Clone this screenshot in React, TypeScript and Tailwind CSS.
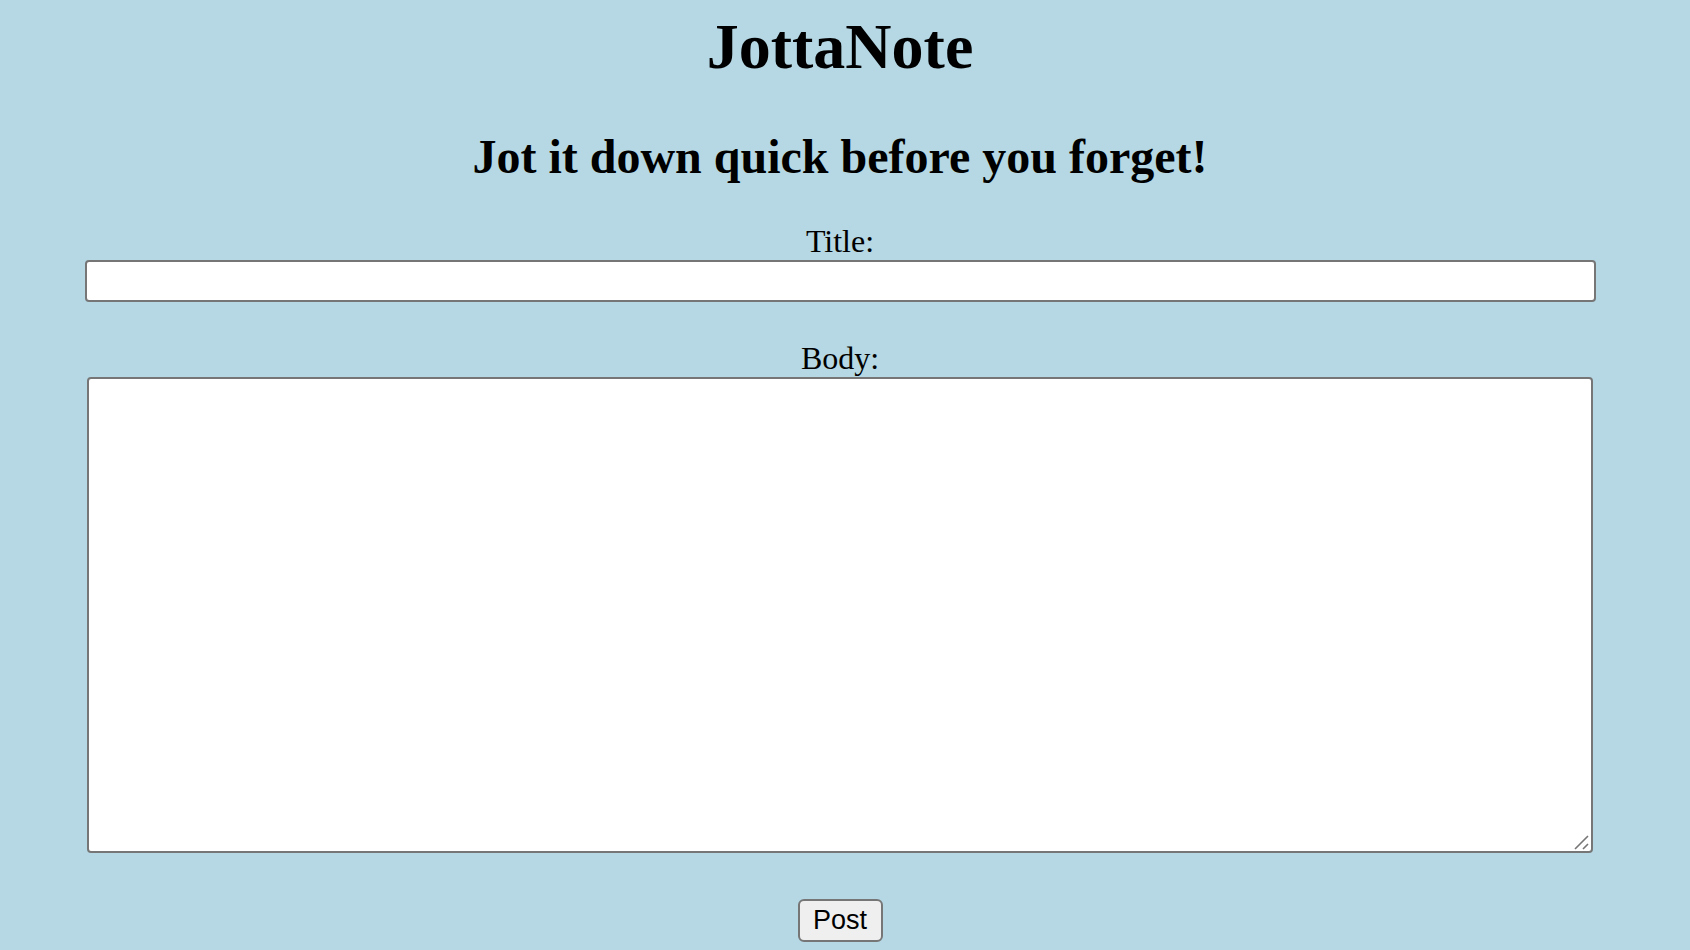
import { useState } from "react";

const serif = "font-['Liberation_Serif','Times_New_Roman',serif]";

const ResizeGrip = () => (
  <svg
    className="absolute right-[4px] bottom-[3px] pointer-events-none"
    width="15"
    height="15"
    viewBox="0 0 15 15"
  >
    <path d="M1 14 L14 1 M9 14 L14 9" stroke="#767676" strokeWidth="1.6" />
  </svg>
);

const App = () => {
  const [title, setTitle] = useState("");
  const [body, setBody] = useState("");

  return (
    <div className={`min-h-screen w-full bg-[#b5d8e4] text-black ${serif}`}>
      <div className="w-[1680px] flex flex-col items-center text-center">
        <h1 className="mt-[11px] text-[64px] leading-[71px] font-bold">JottaNote</h1>

        <h2 className="mt-[48px] text-[48px] leading-[53px] font-bold">
          Jot it down quick before you forget!
        </h2>

        {/* note form */}
        <form className="flex flex-col items-center" onSubmit={(e) => e.preventDefault()}>
          <label htmlFor="title" className="mt-[40px] text-[32px] leading-[36px]">
            Title:
          </label>
          <input
            id="title"
            type="text"
            value={title}
            onChange={(e) => setTitle(e.target.value)}
            className="block mt-[1px] w-[1511px] h-[42px] px-2 bg-white border-2 border-[#767676] rounded-[4px] outline-none text-[26px] font-['Liberation_Sans',Arial,sans-serif]"
          />

          <label htmlFor="body" className="mt-[38px] text-[32px] leading-[36px]">
            Body:
          </label>
          <div className="relative mt-[1px]">
            <textarea
              id="body"
              value={body}
              onChange={(e) => setBody(e.target.value)}
              className="block w-[1506px] h-[476px] p-1 bg-white border-2 border-[#767676] rounded-[4px] outline-none resize-none text-[26px] font-['Liberation_Mono',monospace]"
            />
            <ResizeGrip />
          </div>

          <button
            type="submit"
            className="mt-[46px] h-[43px] w-[85px] bg-[#efefef] border-2 border-[#767676] rounded-[6px] text-[27px] leading-none font-['Liberation_Sans',Arial,sans-serif]"
          >
            Post
          </button>
        </form>
      </div>
    </div>
  );
};

export default App;
